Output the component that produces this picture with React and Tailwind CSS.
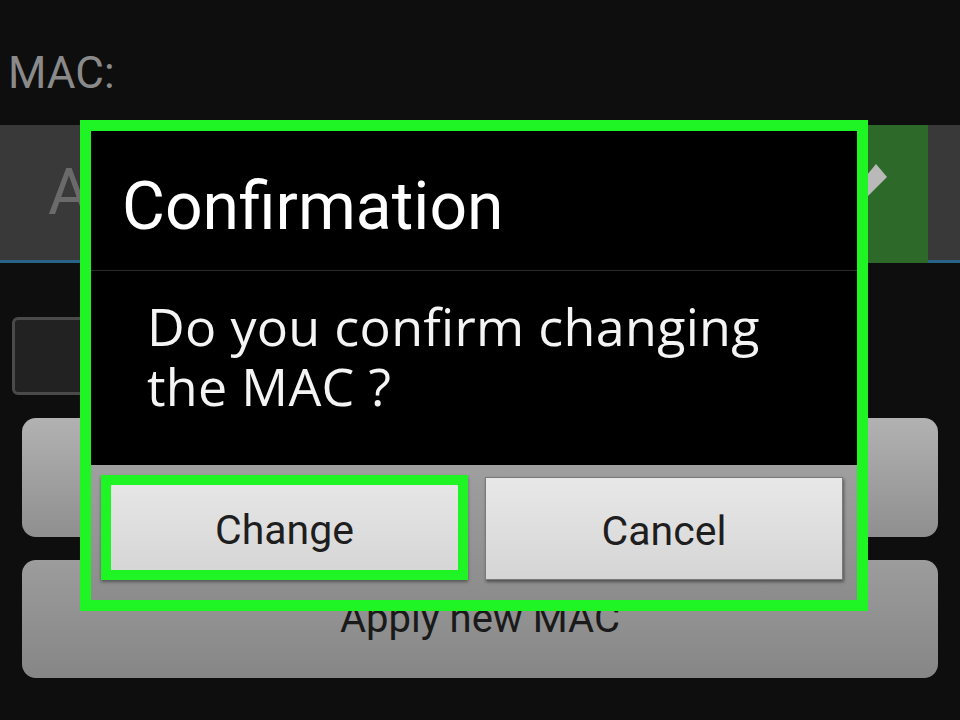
import React from 'react';

const roboto = { fontFamily: 'Roboto, "Liberation Sans", sans-serif' };

function Background() {
  return (
    <div className="flex flex-col">
      {/* MAC label */}
      <div className="h-[125px] flex items-center pl-[8px] pt-[20px]">
        <span className="text-[44px] leading-none text-[#8a8a8a] font-['Roboto',sans-serif]">MAC:</span>
      </div>

      {/* input row */}
      <div className="h-[138px] flex">
        <div className="flex-1 bg-[#393939] border-b-[3px] border-[#2a6288] flex items-center pl-[48px]">
          <span className="text-[64px] leading-none text-[#6a6a6a] font-['Roboto',sans-serif]">A</span>
        </div>
        <div className="w-[61px] bg-[#2d6a29] relative">
          <svg width="24" height="80" viewBox="0 0 24 80" className="absolute left-0 top-0">
            <polygon points="0,50 9,39 20,52 0,72" fill="#b9b9b9" />
          </svg>
        </div>
        <div className="w-[32px] bg-[#393939] border-b-[3px] border-[#2a6288]" />
      </div>

      {/* checkbox */}
      <div className="mt-[54px] ml-[12px] w-[100px] h-[78px] rounded-[6px] border-[3px] border-[#4a4a4a] bg-[#222222]" />

      {/* buttons */}
      <div className="mt-[23px] mx-[22px] h-[119px] rounded-[14px] bg-gradient-to-b from-[#b2b2b2] to-[#8f8f8f]" />
      <div className="mt-[23px] mx-[22px] h-[118px] rounded-[14px] bg-gradient-to-b from-[#9c9c9c] to-[#868686] flex items-center justify-center">
        <span className="text-[40px] leading-none text-[#1a1a1a] font-['Roboto',sans-serif]">Apply new MAC</span>
      </div>
    </div>
  );
}

function Dialog() {
  return (
    <div className="absolute left-[80px] top-[120px] w-[788px] h-[491px] border-[11px] border-[#1ff525] bg-black flex flex-col">
      <div className="h-[140px] flex items-center pl-[31px] pt-[12px] border-b border-[#2a2a2a]">
        <span className="text-[66px] leading-none text-white" style={roboto}>Confirmation</span>
      </div>
      <div className="h-[194px] pl-[56px] pt-[25px]">
        <p className="w-[650px] text-[52px] leading-[60px] tracking-[0.3px] text-[#f4f4f4] font-['Open_Sans',sans-serif]">
          Do you confirm changing the MAC ?
        </p>
      </div>
      <div className="flex-1 bg-gradient-to-b from-[#9f9f9f] to-[#8c8c8c] flex pl-[10px] pr-[14px] pt-[10px] gap-[17px]">
        <div className="w-[367px] h-[105px] border-[10px] border-[#1ff525] shadow-[0_2px_3px_rgba(0,0,0,0.4)]">
          <div className="w-full h-full bg-gradient-to-b from-[#e6e6e6] to-[#d6d6d6] flex items-center justify-center pt-[6px]">
            <span className="text-[41px] leading-none text-[#1e1e1e]" style={roboto}>Change</span>
          </div>
        </div>
        <div className="w-[358px] h-[103px] mt-[2px] bg-gradient-to-b from-[#e8e8e8] to-[#d5d5d5] border border-[#7a7a7a] shadow-[1px_2px_3px_rgba(0,0,0,0.45)] flex items-center justify-center pt-[6px]">
          <span className="text-[41px] leading-none text-[#1e1e1e]" style={roboto}>Cancel</span>
        </div>
      </div>
    </div>
  );
}

export default function App() {
  return (
    <div className="relative w-[960px] h-[720px] overflow-hidden bg-[#0e0e0e]">
      <Background />
      <Dialog />
    </div>
  );
}
